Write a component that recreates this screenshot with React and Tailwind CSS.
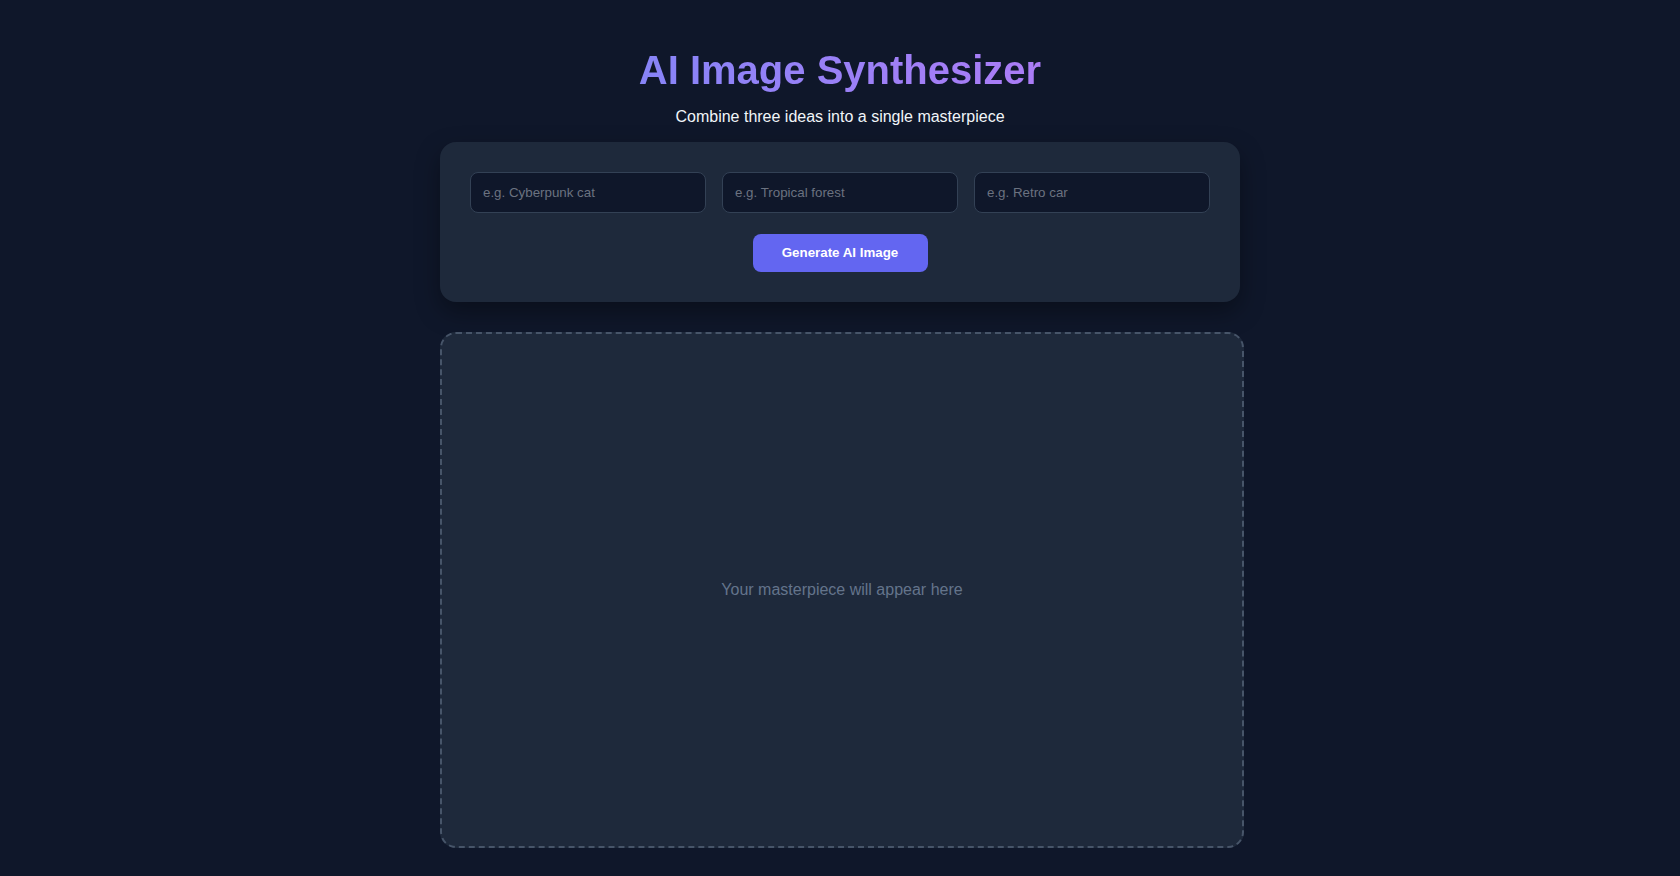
export default function App() {
  return (
    <div
      className="min-h-screen w-full bg-[#0f172a] text-[#f1f5f9]"
      style={{ fontFamily: '"Liberation Sans", Arial, sans-serif' }}
    >
      <div className="mx-auto flex w-[800px] flex-col items-stretch pt-[47px] pb-[30px]">
        <h1 className="text-center text-[40px] leading-[46px] font-bold">
          <span className="bg-gradient-to-r from-[#8784f7] to-[#ab7cf6] bg-clip-text text-transparent">
            AI Image Synthesizer
          </span>
        </h1>
        <p className="mt-[15px] text-center text-[16px] leading-[18px] text-[#f1f5f9]">
          Combine three ideas into a single masterpiece
        </p>

        <div className="mt-[16px] flex flex-col items-center rounded-2xl bg-[#1e293b] p-[30px] shadow-[0_10px_25px_rgba(0,0,0,0.35)]">
          <div className="grid w-full grid-cols-3 gap-4">
            <input
              type="text"
              placeholder="e.g. Cyberpunk cat"
              className="h-[41px] w-full rounded-lg border border-[#334155] bg-[#0f172a] px-3 text-[13.333px] text-[#f1f5f9] outline-none placeholder:text-[#6b7280]"
              style={{ fontFamily: '"Liberation Sans", Arial, sans-serif' }}
            />
            <input
              type="text"
              placeholder="e.g. Tropical forest"
              className="h-[41px] w-full rounded-lg border border-[#334155] bg-[#0f172a] px-3 text-[13.333px] text-[#f1f5f9] outline-none placeholder:text-[#6b7280]"
              style={{ fontFamily: '"Liberation Sans", Arial, sans-serif' }}
            />
            <input
              type="text"
              placeholder="e.g. Retro car"
              className="h-[41px] w-full rounded-lg border border-[#334155] bg-[#0f172a] px-3 text-[13.333px] text-[#f1f5f9] outline-none placeholder:text-[#6b7280]"
              style={{ fontFamily: '"Liberation Sans", Arial, sans-serif' }}
            />
          </div>
          <button
            type="button"
            className="mt-[21px] flex h-[38px] w-[175px] items-center justify-center rounded-lg bg-[#6366f1] text-[13.333px] font-bold text-white"
            style={{ fontFamily: '"Liberation Sans", Arial, sans-serif' }}
          >
            Generate AI Image
          </button>
        </div>

        <div className="mt-[30px] flex h-[516px] w-[804px] items-center justify-center rounded-2xl border-2 border-dashed border-[#475569] bg-[#1e293b]">
          <span className="text-[16px] text-[#64748b]">Your masterpiece will appear here</span>
        </div>
      </div>
    </div>
  );
}
